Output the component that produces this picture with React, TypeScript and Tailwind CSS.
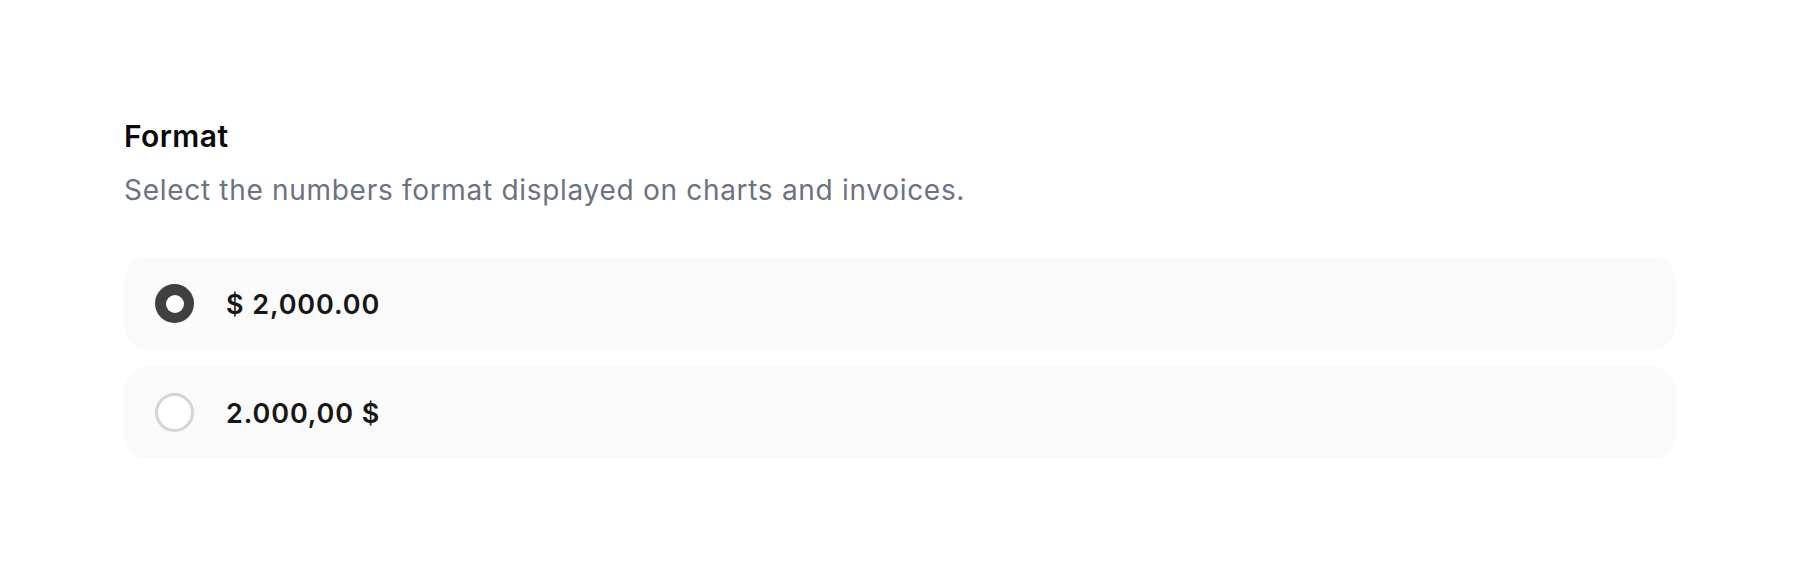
import { useState } from 'react'

const options = [
  { id: 'us', label: '$ 2,000.00' },
  { id: 'eu', label: '2.000,00 $' },
]

export default function App() {
  const [format, setFormat] = useState('us')

  return (
    <div className="min-h-[583px] w-full bg-white px-[124px] pt-[115px] font-['Inter',sans-serif]">
      <h2 className="text-[30px] font-semibold leading-[42px] tracking-[0.4px] text-[#0a0a0a]">Format</h2>
      <p className="mt-[13px] text-[28px] leading-[40px] tracking-[0.7px] text-[#6b7280]">
        Select the numbers format displayed on charts and invoices.
      </p>

      <div className="mt-[47px] flex flex-col gap-[16px]">
        {options.map((opt) => {
          const checked = format === opt.id
          return (
            <label
              key={opt.id}
              className="flex h-[93px] cursor-pointer items-center gap-[32px] rounded-[24px] bg-[#fafafa] px-[31px]"
            >
              <input
                type="radio"
                name="format"
                value={opt.id}
                checked={checked}
                onChange={() => setFormat(opt.id)}
                className="sr-only"
              />
              {checked ? (
                <span className="flex h-[39px] w-[39px] items-center justify-center rounded-full bg-[#404040]">
                  <span className="h-[18px] w-[18px] rounded-full bg-white" />
                </span>
              ) : (
                <span className="h-[39px] w-[39px] rounded-full border-[3px] border-[#d4d4d4] bg-white" />
              )}
              <span className="pt-[4px] text-[27px] font-semibold tracking-[0.9px] text-[#171717]">
                {opt.label}
              </span>
            </label>
          )
        })}
      </div>
    </div>
  )
}
